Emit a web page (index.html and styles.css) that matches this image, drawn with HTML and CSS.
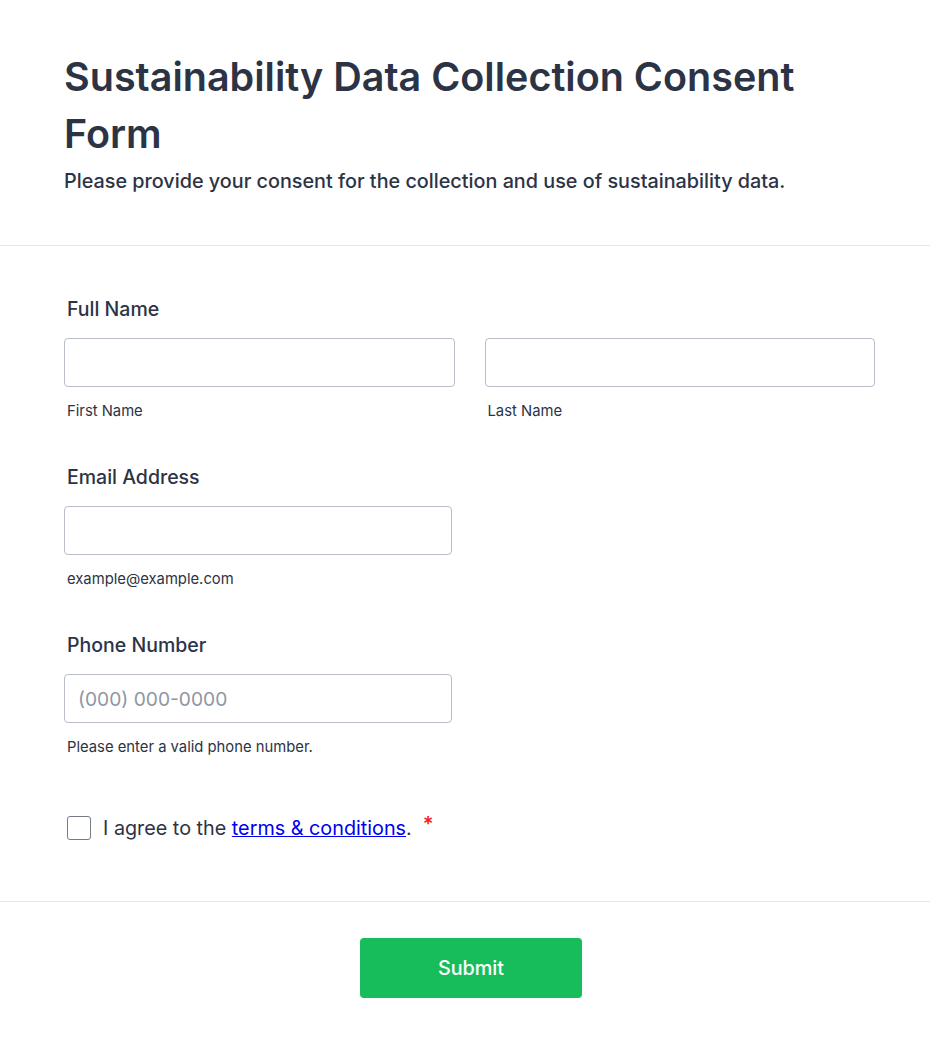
FILE: index.html
```html
<!DOCTYPE html>
<html lang="en">
<head>
<meta charset="utf-8">
<title>Sustainability Data Collection Consent Form</title>
<link rel="stylesheet" href="styles.css">
</head>
<body>
<div class="page">
  <header class="form-header">
    <h1 class="title">Sustainability Data Collection Consent Form</h1>
    <p class="subtitle">Please provide your consent for the collection and use of sustainability data.</p>
  </header>

  <form class="form-body">
    <div class="field">
      <label class="label">Full Name</label>
      <div class="name-row">
        <div class="sub-field">
          <input class="input" type="text">
          <span class="sublabel">First Name</span>
        </div>
        <div class="sub-field">
          <input class="input" type="text">
          <span class="sublabel">Last Name</span>
        </div>
      </div>
    </div>

    <div class="field">
      <label class="label">Email Address</label>
      <div class="sub-field narrow">
        <input class="input" type="email">
        <span class="sublabel">example@example.com</span>
      </div>
    </div>

    <div class="field">
      <label class="label">Phone Number</label>
      <div class="sub-field narrow">
        <input class="input" type="tel" placeholder="(000) 000-0000">
        <span class="sublabel">Please enter a valid phone number.</span>
      </div>
    </div>

    <div class="consent">
      <span class="checkbox"></span>
      <span class="consent-text">I agree to the <a href="#" class="link">terms &amp; conditions</a>.</span>
      <span class="required">*</span>
    </div>
  </form>

  <footer class="form-footer">
    <button class="submit" type="button">Submit</button>
  </footer>
</div>
</body>
</html>
```

FILE: styles.css
```css
* { box-sizing: border-box; }

html, body {
  margin: 0;
  padding: 0;
  background: #ffffff;
}

body {
  font-family: Inter, "Noto Sans", sans-serif;
  color: #2c3345;
}

.page {
  width: 930px;
}

.form-header {
  padding: 49px 64px 49px 64px;
  border-bottom: 1px solid #e3e5ee;
}

.title {
  margin: 0;
  font-size: 39.5px;
  line-height: 57px;
  font-weight: 600;
  color: #2c3345;
}

.subtitle {
  margin: 3px 0 0 0;
  font-size: 19.8px;
  line-height: 30px;
  font-weight: 500;
  color: #2c3345;
}

.form-body {
  padding: 51px 55px 59px 64px;
  display: flex;
  flex-direction: column;
  gap: 45px;
  border-bottom: 1px solid #e3e5ee;
}

.field {
  display: flex;
  flex-direction: column;
}

.label {
  font-size: 19.5px;
  line-height: 24px;
  font-weight: 500;
  padding-left: 3px;
  margin-bottom: 17px;
}

.name-row {
  display: flex;
  gap: 30px;
}

.sub-field {
  display: flex;
  flex-direction: column;
  flex: 1;
}

.sub-field.narrow {
  width: 388px;
  flex: none;
}

.input {
  height: 49px;
  width: 100%;
  border: 1px solid #b8bdc9;
  border-radius: 4px;
  background: #ffffff;
  padding: 0 13px;
  font-family: Inter, "Noto Sans", sans-serif;
  font-size: 19.2px;
  color: #2c3345;
  outline: none;
}

.input::placeholder {
  color: #8f96a3;
}

.sublabel {
  margin-top: 15px;
  padding-left: 3px;
  font-size: 14.8px;
  line-height: 18px;
  color: #2c3345;
}

.consent {
  margin-top: 13px;
  display: flex;
  align-items: center;
  padding-left: 3px;
  height: 28px;
}

.checkbox {
  width: 24px;
  height: 24px;
  border: 1px solid #757b87;
  border-radius: 3px;
  background: #fff;
  margin-right: 12px;
}

.consent-text {
  font-size: 19.8px;
  line-height: 28px;
  color: #2c3345;
}

.link {
  color: #0000ee;
  text-decoration: underline;
}

.required {
  color: #ff1a1a;
  font-size: 20px;
  font-weight: 600;
  margin-left: 11px;
  align-self: flex-start;
  line-height: 20px;
}

.form-footer {
  padding: 36px 55px 49px 67px;
  display: flex;
  justify-content: center;
}

.submit {
  width: 222px;
  height: 60px;
  background: #18bd5b;
  border: none;
  border-radius: 4px;
  color: #ffffff;
  font-family: Inter, "Noto Sans", sans-serif;
  font-size: 19.8px;
  font-weight: 500;
  cursor: pointer;
}
```
